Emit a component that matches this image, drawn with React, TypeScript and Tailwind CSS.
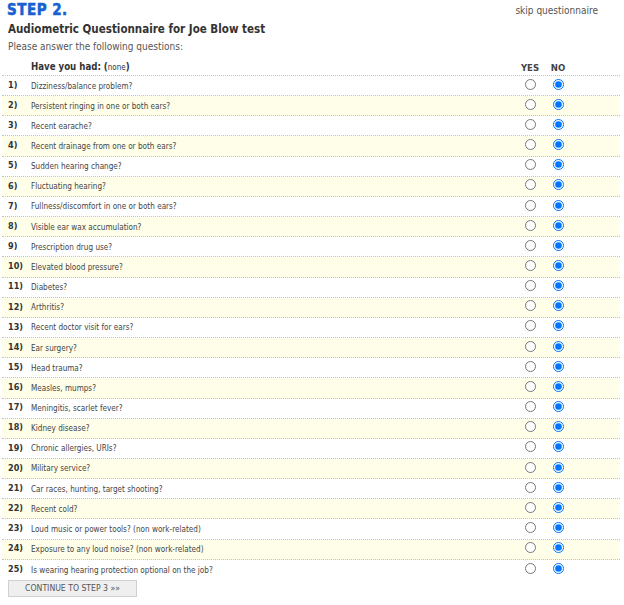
import React from "react";

const questions = [
  "Dizziness/balance problem?",
  "Persistent ringing in one or both ears?",
  "Recent earache?",
  "Recent drainage from one or both ears?",
  "Sudden hearing change?",
  "Fluctuating hearing?",
  "Fullness/discomfort in one or both ears?",
  "Visible ear wax accumulation?",
  "Prescription drug use?",
  "Elevated blood pressure?",
  "Diabetes?",
  "Arthritis?",
  "Recent doctor visit for ears?",
  "Ear surgery?",
  "Head trauma?",
  "Measles, mumps?",
  "Meningitis, scarlet fever?",
  "Kidney disease?",
  "Chronic allergies, URIs?",
  "Military service?",
  "Car races, hunting, target shooting?",
  "Recent cold?",
  "Loud music or power tools? (non work-related)",
  "Exposure to any loud noise? (non work-related)",
  "Is wearing hearing protection optional on the job?",
];

const font = "font-['DejaVu_Sans_Condensed','DejaVu_Sans','Liberation_Sans',sans-serif]";

export default function App() {
  return (
    <div className={`w-[624px] h-[605px] bg-white overflow-hidden ${font} text-[#444]`}>
      <div className="flex justify-between pl-[7px] pt-[2px] pr-[26px]">
        <div className="text-[15px] leading-[16px] font-bold text-[#1660d2] tracking-[0.5px] [-webkit-text-stroke:0.5px_#1660d2]">STEP 2.</div>
        <div className="text-[10px] leading-[16px] text-[#555] pt-[1px]">skip questionnaire</div>
      </div>
      <div className="pl-[8px] pt-[3px] text-[11.5px] leading-[14px] font-bold text-[#333]">
        Audiometric Questionnaire for Joe Blow test
      </div>
      <div className="pl-[8px] pt-[4px] text-[10px] leading-[14px] text-[#555]">
        Please answer the following questions:
      </div>
      <div className="ml-[2px] w-[618px] mt-[7px]">
        <div className="flex items-end h-[15px] border-b border-dotted border-[#c2c2c2] pb-[1px]">
          <div className="w-[29px]" />
          <div className="flex-1 text-[9.6px] font-bold text-[#333] leading-[13px]">
            Have you had: (<span className="text-[8px] font-normal">none</span>)
          </div>
          <div className="w-[28px] text-center text-[9.5px] font-bold text-[#444] leading-[13px]">YES</div>
          <div className="w-[28px] text-center text-[9.5px] font-bold text-[#444] leading-[13px]">NO</div>
          <div className="w-[48px]" />
        </div>
        {questions.map((q, i) => (
          <div
            key={i}
            className={`flex items-center h-[20.17px] ${i < questions.length - 1 ? "border-b border-dotted border-[#c2c2c2]" : ""} ${i % 2 === 1 ? "bg-[#fefee9]" : "bg-white"}`}
          >
            <div className="w-[29px] pl-[6px] text-[9px] font-bold text-[#333]">{i + 1})</div>
            <div className="flex-1 text-[8.1px] text-[#444]">{q}</div>
            <div className="w-[28px] flex justify-center">
              <input type="radio" name={`q${i}`} className="m-0 w-[11px] h-[11px] mb-[3px]" />
            </div>
            <div className="w-[28px] flex justify-center">
              <input type="radio" name={`q${i}`} defaultChecked className="m-0 w-[11px] h-[11px] mb-[3px]" />
            </div>
            <div className="w-[48px]" />
          </div>
        ))}
      </div>
      <div className="flex pl-[8px]">
        <button className="w-[129px] h-[17px] bg-[#efefef] border border-[#d0d0d0] text-[8.6px] text-[#555] leading-[15px] text-center">
          CONTINUE TO STEP 3 »»
        </button>
      </div>
    </div>
  );
}
